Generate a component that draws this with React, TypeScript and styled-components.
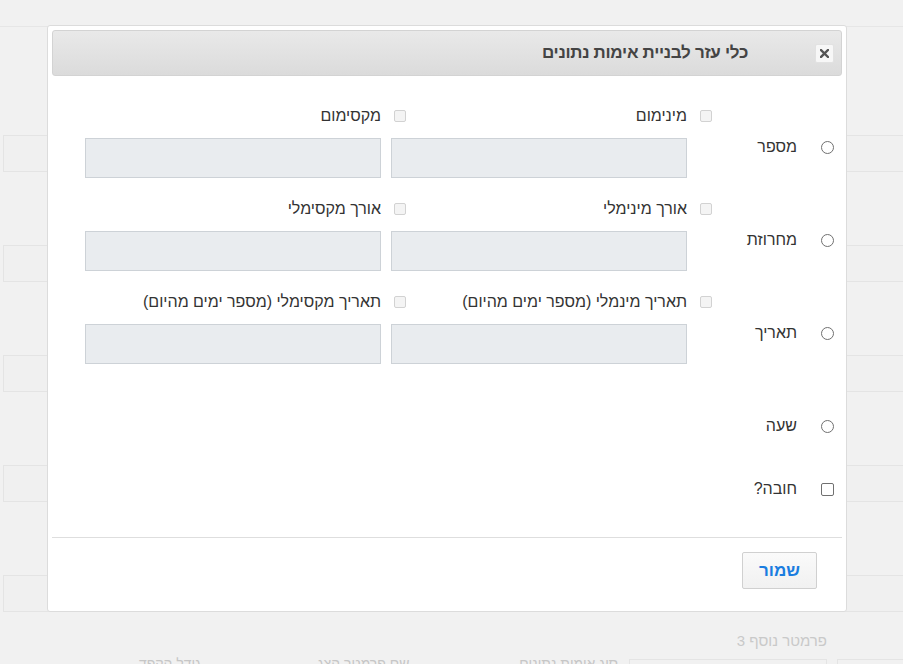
import React from "react";
import styled, { createGlobalStyle } from "styled-components";

const Global = createGlobalStyle`
  html, body { margin: 0; padding: 0; }
  body {
    background: #f1f1f1;
    font-family: "Liberation Sans", Arial, "Noto Sans", sans-serif;
    overflow: hidden;
    width: 903px;
    height: 664px;
  }
  * { box-sizing: border-box; }
`;

/* ---------- background page (dimmed form behind the dialog) ---------- */
const Page = styled.div`
  position: relative;
  width: 903px;
  height: 664px;
  overflow: hidden;
`;

const TopBar = styled.div`
  height: 27px;
  border-bottom: 1px solid #e6e6e6;
`;

const BgSection = styled.div`
  padding-top: 108px;
`;

const BgRow = styled.div`
  display: flex;
  gap: 10.5px;
  padding-left: 3px;
  margin-top: 73px;
  &:first-child { margin-top: 0; }
`;

const BgBox = styled.div`
  flex: 0 0 198px;
  height: 37px;
  border: 1px solid #e4e4e4;
  background: #f0f0f0;
`;

const BgHeading = styled.div`
  margin-top: 20px;
  width: 827px;
  direction: rtl;
  text-align: right;
  font-size: 15px;
  color: #c9c9c9;
`;

const BgLabels = styled.div`
  display: flex;
  gap: 10.5px;
  padding-left: 3px;
  margin-top: 6px;
`;

const BgLabel = styled.div`
  flex: 0 0 198px;
  direction: rtl;
  text-align: right;
  font-size: 14px;
  color: #c6c6c6;
  line-height: 16px;
`;

const BgCol = styled.div`
  flex: 0 0 198px;
  height: 40px;
  margin-top: 4px;
  border: 1px solid #e4e4e4;
`;

/* ---------- dialog ---------- */
const Dialog = styled.div`
  position: absolute;
  left: 47px;
  top: 25px;
  width: 800px;
  height: 587px;
  background: #fff;
  border: 1px solid #dcdcdc;
  border-radius: 3px;
  padding: 4px;
  display: flex;
  flex-direction: column;
  direction: rtl;
`;

const Header = styled.div`
  height: 46px;
  flex: 0 0 46px;
  display: flex;
  align-items: center;
  background: linear-gradient(#e9e9e9, #dbdbdb);
  border: 1px solid #d3d3d3;
  border-radius: 3px;
`;

const CloseButton = styled.button`
  width: 19px;
  height: 19px;
  margin-right: 7px;
  padding: 0;
  border: 1px solid #e2e2e2;
  background: #f7f7f7;
  border-radius: 2px;
  display: flex;
  align-items: center;
  justify-content: center;
`;

const Title = styled.div`
  margin-right: 67px;
  font-size: 17px;
  font-weight: bold;
  color: #444;
  letter-spacing: -0.3px;
`;

const Body = styled.div`
  flex: 1;
  padding-top: 30px;
`;

const Row = styled.div`
  display: flex;
  margin-bottom: 21px;
`;

const ChoiceCell = styled.label<{ $pt?: number; $mt?: number }>`
  flex: 0 0 155px;
  display: flex;
  align-items: center;
  gap: 24px;
  padding-right: 8px;
  padding-top: ${(p) => p.$pt ?? 32}px;
  margin-top: ${(p) => p.$mt ?? 0}px;
  height: fit-content;
  font-size: 16px;
  line-height: 18px;
  color: #333;
`;

const Radio = styled.span`
  width: 13px;
  height: 13px;
  border: 1px solid #707070;
  border-radius: 50%;
  background: #fff;
  flex: 0 0 13px;
`;

const Check = styled.span`
  width: 13px;
  height: 13px;
  border: 1px solid #707070;
  border-radius: 2px;
  background: #fff;
  flex: 0 0 13px;
`;

const Fields = styled.div`
  display: flex;
  gap: 10px;
`;

const Field = styled.div`
  width: 296px;
  display: flex;
  flex-direction: column;
`;

const FieldLabel = styled.label`
  display: flex;
  align-items: center;
  height: 20px;
  font-size: 16px;
  color: #333;
  white-space: nowrap;
`;

const SmallCheck = styled.span`
  width: 12px;
  height: 12px;
  margin-right: -25px;
  margin-left: 13px;
  border: 1px solid #d2d2d2;
  border-radius: 2px;
  background: #f4f4f4;
  flex: 0 0 12px;
`;

const Input = styled.div`
  margin-top: 12px;
  height: 40px;
  background: #e9ecef;
  border: 1px solid #cdd2d7;
`;

const Footer = styled.div`
  border-top: 1px solid #dedede;
  padding: 14px 25px 18px;
  display: flex;
`;

const SaveButton = styled.button`
  width: 75px;
  height: 37px;
  background: linear-gradient(#fafafa, #f1f1f1);
  border: 1px solid #d0d0d0;
  border-radius: 2px;
  font-family: "Liberation Sans", Arial, sans-serif;
  font-size: 17px;
  font-weight: bold;
  color: #1a7de0;
`;

const CloseIcon = () => (
  <svg width="9" height="9" viewBox="0 0 9 9">
    <path d="M1 1 L8 8 M8 1 L1 8" stroke="#555" strokeWidth="2.4" strokeLinecap="square" />
  </svg>
);

type FieldDef = { label: string };
const rows: { choice: string; fields: [FieldDef, FieldDef] }[] = [
  { choice: "מספר", fields: [{ label: "מינימום" }, { label: "מקסימום" }] },
  { choice: "מחרוזת", fields: [{ label: "אורך מינימלי" }, { label: "אורך מקסימלי" }] },
  {
    choice: "תאריך",
    fields: [
      { label: "תאריך מינמלי (מספר ימים מהיום)" },
      { label: "תאריך מקסימלי (מספר ימים מהיום)" },
    ],
  },
];

export default function App() {
  return (
    <>
      <Global />
      <Page>
        <TopBar />
        <BgSection>
          {[0, 1, 2, 3, 4].map((i) => (
            <BgRow key={i}>
              {[0, 1, 2, 3, 4].map((j) => (
                <BgBox key={j} />
              ))}
            </BgRow>
          ))}
          <BgHeading>פרמטר נוסף 3</BgHeading>
          <BgLabels>
            <BgLabel>גודל הקפד</BgLabel>
            <BgLabel>שם פרמטר הצג</BgLabel>
            <BgLabel>סוג אימות נתונים</BgLabel>
            <BgCol />
            <BgCol />
          </BgLabels>
        </BgSection>

        <Dialog>
          <Header>
            <CloseButton aria-label="close">
              <CloseIcon />
            </CloseButton>
            <Title>כלי עזר לבניית אימות נתונים</Title>
          </Header>
          <Body>
            {rows.map((r) => (
              <Row key={r.choice}>
                <ChoiceCell>
                  <Radio />
                  {r.choice}
                </ChoiceCell>
                <Fields>
                  {r.fields.map((f) => (
                    <Field key={f.label}>
                      <FieldLabel>
                        <SmallCheck />
                        {f.label}
                      </FieldLabel>
                      <Input />
                    </Field>
                  ))}
                </Fields>
              </Row>
            ))}
            <ChoiceCell>
              <Radio />
              שעה
            </ChoiceCell>
            <ChoiceCell $pt={0} $mt={45}>
              <Check />
              חובה?
            </ChoiceCell>
          </Body>
          <Footer>
            <SaveButton>שמור</SaveButton>
          </Footer>
        </Dialog>
      </Page>
    </>
  );
}
